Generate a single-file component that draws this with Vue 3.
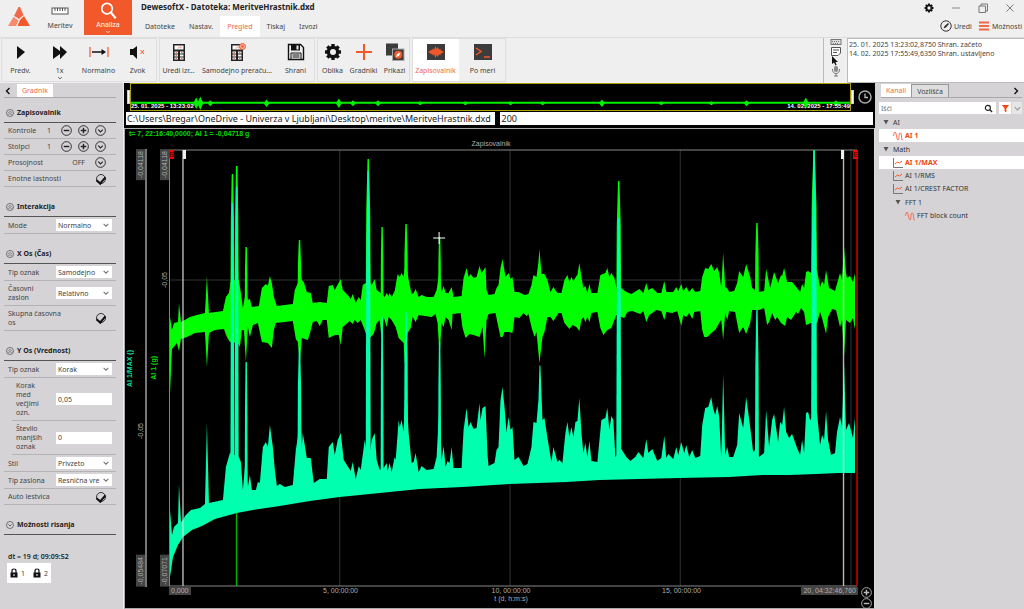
<script setup>
import { ref } from 'vue'

const menu = ['Datoteke', 'Nastav.', 'Pregled', 'Tiskaj', 'Izvozi']
const activeMenu = ref('Pregled')

const ribbon = [
  {
    size: 'lg',
    items: [
      { label: 'Predv.', icon: 'play' },
      { label: '1x', icon: 'forward', more: true },
      { label: 'Normalno', icon: 'span' },
      { label: 'Zvok', icon: 'mute' },
    ],
  },
  {
    size: 'xl',
    items: [
      { label: 'Uredi izr...', icon: 'calc', width: 'narrow' },
      { label: 'Samodejno preraču...', icon: 'calc-auto', width: 'wide' },
      { label: 'Shrani', icon: 'save', width: 'narrow' },
    ],
  },
  {
    size: 'sm',
    items: [
      { label: 'Oblika', icon: 'gear' },
      { label: 'Gradniki', icon: 'cross' },
      { label: 'Prikazi', icon: 'displays' },
    ],
  },
  {
    size: 'md',
    items: [
      { label: 'Zapisovalnik', icon: 'wave', active: true },
      { label: 'Po meri', icon: 'console' },
    ],
  },
]

const sections = [
  {
    title: 'Zapisovalnik',
    open: true,
    rows: [
      { label: 'Kontrole', type: 'stepper', value: '1' },
      { label: 'Stolpci', type: 'stepper', value: '1' },
      { label: 'Prosojnost', type: 'expand', value: 'OFF' },
      { label: 'Enotne lastnosti', type: 'check', value: true },
    ],
  },
  {
    title: 'Interakcija',
    open: true,
    rows: [{ label: 'Mode', type: 'select', value: 'Normalno' }],
  },
  {
    title: 'X Os (Čas)',
    open: true,
    rows: [
      { label: 'Tip oznak', type: 'select', value: 'Samodejno' },
      { label: 'Časovni zaslon', type: 'select', value: 'Relativno' },
      { label: 'Skupna časovna os', type: 'check', value: true },
    ],
  },
  {
    title: 'Y Os (Vrednost)',
    open: true,
    rows: [
      { label: 'Tip oznak', type: 'select', value: 'Korak' },
      { label: 'Korak med večjimi ozn.', type: 'text', value: '0,05', indent: true },
      { label: 'Število manjših oznak', type: 'text', value: '0', indent: true },
      { label: 'Stil', type: 'select', value: 'Privzeto' },
      { label: 'Tip zaslona', type: 'select', value: 'Resnična vre' },
      { label: 'Auto lestvica', type: 'check', value: true },
    ],
  },
  { title: 'Možnosti risanja', open: false, rows: [] },
]

const channels = [
  { label: 'AI', kind: 'group', level: 0 },
  { label: 'AI 1', kind: 'signal', level: 1, active: true },
  { label: 'Math', kind: 'group', level: 0 },
  { label: 'AI 1/MAX', kind: 'math', level: 1, active: true },
  { label: 'AI 1/RMS', kind: 'math', level: 1 },
  { label: 'AI 1/CREST FACTOR', kind: 'math', level: 1 },
  { label: 'FFT 1', kind: 'group', level: 1 },
  { label: 'FFT block count', kind: 'signal', level: 2 },
]

const log = [
  '25. 01. 2025 13:23:02,8750 Shran. začeto',
  '14. 02. 2025 17:55:49,6350 Shran. ustavljeno',
]

const filePath = ref('C:\\Users\\Bregar\\OneDrive - Univerza v Ljubljani\\Desktop\\meritve\\MeritveHrastnik.dxd')
const fileNote = ref('200')
const search = ref('')

// envelope of AI 1, upper edge then lower edge
const aiTop = '170,317 172,330 174,323 178,322 179,303 181,322 183,321 190,317 197,315 205,313 207,276 209,313 223,311 226,297 229,293 231,280 239,280 241,293 243,308 245,297 246,290 248,300 250,299 252,307 259,306 262,288 266,284 268,286 270,276 272,283 274,297 277,306 293,304 295,290 298,283 300,270 302,280 304,282 307,292 311,293 313,303 320,302 327,303 329,286 333,285 335,290 341,279 343,290 348,295 351,299 353,294 356,303 359,297 361,300 363,285 366,283 371,283 372,285 375,279 377,290 381,293 385,297 387,293 389,296 390,293 392,297 395,291 398,274 400,277 402,273 404,277 406,262 409,280 412,294 414,293 416,289 419,297 422,295 427,297 434,297 437,290 440,270 442,292 444,286 446,293 449,293 452,287 454,297 462,296 464,278 467,268 469,277 471,274 474,278 477,277 480,266 482,273 486,267 487,290 489,295 495,294 497,288 499,285 501,268 503,259 506,277 509,273 511,279 513,277 515,292 519,292 525,295 529,294 532,285 534,275 537,277 539,262 540,249 542,274 545,274 548,280 551,292 554,287 558,293 562,293 565,280 568,275 570,282 572,277 574,281 577,276 578,275 580,263 582,277 584,288 586,286 588,293 590,284 592,293 598,293 601,275 606,273 608,268 610,277 612,273 615,278 617,287 622,288 627,292 632,294 637,291 640,289 644,293 647,283 649,290 653,288 658,293 662,293 665,281 667,292 674,292 677,287 679,291 682,284 684,291 687,287 690,292 693,288 696,292 701,291 703,277 706,268 709,269 712,264 715,271 718,267 720,273 722,287 724,253 726,287 728,288 730,292 735,291 738,283 740,271 744,277 747,264 751,277 753,288 756,290 760,292 765,291 767,269 771,288 775,272 779,283 782,275 783,276 785,268 788,282 793,282 798,288 801,292 803,284 805,288 807,272 809,271 812,273 818,270 821,287 823,281 825,285 827,270 830,288 836,291 841,273 843,280 845,247 847,273 848,278 851,276 854,282 856,273'
const aiBottom = '856,330 854,318 851,323 847,320 845,357 843,320 841,327 837,310 833,309 829,317 827,334 823,318 821,312 818,323 812,323 807,325 805,312 802,308 799,314 797,312 792,320 788,317 786,326 782,323 778,317 776,320 773,313 770,322 768,325 765,308 760,310 756,310 753,310 751,323 747,334 744,327 740,333 738,323 736,312 730,311 728,320 726,313 724,340 722,320 720,323 716,330 712,333 708,337 705,337 703,330 701,311 695,312 693,319 690,313 687,317 684,315 682,326 678,311 673,313 667,312 665,320 662,311 657,310 653,313 650,315 647,322 644,311 641,314 633,311 628,312 625,318 622,317 617,315 615,320 612,328 608,330 604,335 601,328 598,312 592,313 590,322 588,317 586,322 584,317 582,320 580,331 577,327 573,325 570,329 565,323 562,313 559,313 554,321 551,317 548,317 545,332 543,337 540,363 537,332 535,337 532,327 529,314 527,316 524,313 520,318 515,317 513,333 510,332 505,332 503,337 501,337 498,323 496,313 489,314 487,320 485,358 483,327 480,337 474,335 470,334 466,338 463,328 461,313 453,314 452,330 449,320 446,317 444,327 442,323 440,357 438,323 436,314 432,317 419,315 416,322 413,317 411,328 408,333 406,363 405,362 404,343 399,338 396,327 392,320 389,317 387,327 384,317 382,340 380,320 377,323 374,334 368,340 365,330 361,320 358,323 355,320 353,324 350,321 343,327 341,345 339,335 335,335 329,338 327,320 323,320 320,326 317,321 313,322 311,330 308,340 302,338 300,363 298,342 296,339 293,321 276,323 274,330 272,348 268,343 262,342 258,323 253,325 250,337 248,327 246,362 244,330 242,330 240,347 238,343 230,342 227,337 224,329 215,330 209,333 207,367 205,332 195,333 187,337 181,339 179,351 177,343 172,349 170,393'

// envelope of AI 1/MAX
const maxTop = '170,510 172,535 174,527 178,523 179,484 181,522 183,520 185,516 191,510 200,508 205,504 207,423 209,503 223,500 226,467 230,453 239,457 241,462 243,490 245,467 248,487 250,475 252,490 256,490 258,482 260,483 263,447 266,442 268,447 270,425 273,447 275,470 277,486 280,484 285,487 293,485 296,450 298,437 300,400 302,447 303,433 307,458 311,458 314,483 320,479 327,479 329,447 333,442 335,455 338,440 341,433 344,460 351,471 353,462 356,479 359,466 361,470 365,440 367,453 370,453 372,440 375,433 377,460 380,470 384,468 387,463 388,471 390,463 392,472 395,457 396,460 399,420 400,427 402,420 404,432 406,380 409,433 412,463 414,462 416,453 419,472 422,466 427,470 434,469 437,457 440,400 442,460 444,446 446,467 448,461 450,463 452,447 454,468 462,468 464,430 467,408 469,427 471,422 474,429 477,428 480,403 481,420 483,408 486,406 488,455 489,466 495,463 497,450 499,447 501,400 503,387 505,407 507,432 509,417 511,430 513,427 515,460 519,457 524,466 528,464 532,447 534,422 537,423 539,400 540,365 541,366 543,420 545,418 548,438 552,462 554,447 558,462 560,460 563,463 566,433 568,422 570,437 572,427 574,437 576,422 578,421 580,398 582,433 584,453 586,443 588,457 590,441 592,461 598,462 602,420 606,418 608,408 610,430 612,416 614,420 616,457 622,449 627,457 631,461 636,457 639,452 644,458 647,439 649,453 653,449 658,461 662,458 665,436 667,458 669,454 674,459 677,447 679,455 682,442 685,453 687,445 690,457 693,450 696,458 701,456 703,425 706,408 709,407 712,397 714,409 716,415 718,406 720,417 722,457 724,374 726,455 728,447 730,457 734,457 738,445 740,413 744,428 747,397 751,427 754,452 756,450 760,457 765,453 767,410 770,447 773,420 775,414 779,442 781,422 783,425 785,407 787,432 790,438 793,434 798,448 801,455 803,440 805,453 807,413 809,412 811,420 818,413 821,445 823,435 825,440 827,411 829,440 832,455 836,453 838,432 841,417 843,427 845,362 847,430 850,423 854,438 856,417'
const maxBottom = '856,473 840,473 817,474 790,475 763,475 730,477 680,478 640,479 600,480 567,482 510,484 463,487 420,489 380,493 340,497 310,501 280,506 253,510 237,513 215,519 202,526 192,530 183,537 178,545 173,557 170,577'

// narrow peaks: position, AI 1 top, AI 1/MAX top, base, half width
const peaks = [
  { x: 232.5, top: 174, max: 203, base: 480, half: 2 },
  { x: 236.8, top: 166, max: 187, base: 480, half: 2 },
  { x: 246.3, top: 247, max: 362, base: 495, half: 1.5 },
  { x: 299.7, top: 240, max: 347, base: 460, half: 2 },
  { x: 368.5, top: 159, max: 171, base: 470, half: 2.5 },
  { x: 382.4, top: 227, max: 317, base: 475, half: 1.5 },
  { x: 406.4, top: 224, max: 312, base: 450, half: 2 },
  { x: 440, top: 237, max: 342, base: 470, half: 1.5 },
  { x: 619.4, top: 181, max: 218, base: 465, half: 2.5 },
  { x: 757.8, top: 223, max: 310, base: 465, half: 2 },
  { x: 815, top: 150, max: 150, base: 450, half: 3 },
]

const peakPoints = (x, top, base, half) => {
  const tip = 0.7
  const shoulder = top + (base - top) * 0.35
  const near = half * 0.8
  return `${x - tip},${top} ${x + tip},${top} ${x + near},${shoulder} ${x + half},${base} ${x - half},${base} ${x - near},${shoulder}`
}

const overviewBumps = [
  [30, 1], [54, 1], [77, 6], [81, 7], [91, 3], [147, 4], [219, 5], [233, 3], [258, 3], [300, 2], [345, 2],
  [390, 2], [422, 2], [481, 4], [540, 2], [590, 2], [625, 3], [684, 6], [714, 3],
]
const overviewPoints = overviewBumps.map(([x, h]) => `${x - 3},22 ${x},${22 - h} ${x + 3},22 ${x},${22 + h}`)
</script>

<template>
  <svg class="sprite" aria-hidden="true">
    <symbol id="i-play" viewBox="0 0 20 18"><path d="M6 3L14 9L6 16Z" fill="#111" /></symbol>
    <symbol id="i-forward" viewBox="0 0 20 18"><path d="M3 3L10 8V3L17 9L10 16V11L3 16Z" fill="#111" /></symbol>
    <symbol id="i-span" viewBox="0 0 20 18">
      <path d="M1 4V14M19 4V14" stroke="#f1592a" stroke-width="1.2" />
      <path d="M3 9H14" stroke="#111" stroke-width="1.5" /><path d="M12.5 6L17 9L12.5 12Z" fill="#111" />
    </symbol>
    <symbol id="i-mute" viewBox="0 0 20 18">
      <path d="M2 6H5L9 3V16L5 12H2Z" fill="#111" /><path d="M12.5 7L16 11M16 7L12.5 11" stroke="#f1592a" />
    </symbol>
    <symbol id="i-calc" viewBox="0 0 20 18">
      <rect x="4" y="1" width="12" height="17" fill="#222" /><rect x="5.5" y="2.5" width="9" height="4" fill="#fff" />
      <path d="M9 5.5L11 3.5M12 3.5V5.5" stroke="#f1592a" stroke-width="0.8" />
      <path d="M5.5 9.5H9M11 9.5H14.5M5.5 12.5H9M11 12.5H14.5M5.5 15.5H9M11 15.5H14.5" stroke="#fff" stroke-width="2" />
      <path d="M6.5 9.5H8M12 9.5H13.5M6.5 12.5H8M6.5 15.5H8M12 15.5H13.5" stroke="#f1592a" stroke-width="0.8" />
    </symbol>
    <symbol id="i-calc-auto" viewBox="0 0 20 18">
      <use href="#i-calc" width="20" height="18" />
      <circle cx="15.5" cy="3.5" r="3" fill="#f9b59f" stroke="#f1592a" /><circle cx="15.5" cy="3.5" r="1.3" fill="#f1592a" />
    </symbol>
    <symbol id="i-save" viewBox="0 0 20 18">
      <path d="M2.5 1.5H14.5L17.5 4.5V16.5H2.5Z" fill="none" stroke="#111" stroke-width="1.4" />
      <path d="M5 1H14V7.5H5Z" fill="#111" /><rect x="10.5" y="2.5" width="2" height="4" fill="#efefef" />
      <path d="M5 16V10H15V16M6.5 12H13.5M6.5 14H13.5" fill="none" stroke="#111" />
    </symbol>
    <symbol id="i-gear" viewBox="0 0 20 18">
      <g fill="#111">
        <path d="M8.3 1H11.7V17H8.3Z" /><path d="M2 7.3H18V10.7H2Z" />
        <path d="M8.3 1H11.7V17H8.3Z" transform="rotate(45 10 9)" /><path d="M8.3 1H11.7V17H8.3Z" transform="rotate(-45 10 9)" />
        <circle cx="10" cy="9" r="6.3" />
      </g>
      <circle cx="10" cy="9" r="3" fill="#efefef" />
    </symbol>
    <symbol id="i-cross" viewBox="0 0 20 18"><path d="M10 1V17M2 9H18" stroke="#f1592a" stroke-width="2" /></symbol>
    <symbol id="i-displays" viewBox="0 0 20 18">
      <rect x="1" y="0.5" width="12" height="12" fill="#3c3c3c" /><rect x="7.5" y="6" width="11.5" height="11.5" fill="#3c3c3c" stroke="#aaa" />
      <circle cx="13.2" cy="11.8" r="4" fill="#f1592a" /><path d="M11 14L12 11L15.5 9.5L14 13Z" fill="#fff" />
    </symbol>
    <symbol id="i-wave" viewBox="0 0 20 18">
      <rect x="1" y="1" width="18" height="16" fill="#3c3c3c" />
      <path d="M2 9L4 8L5 6.5L6 7.5L7 5L8 7L9.5 3L10.5 6L12 4L13 7L14 5.5L15 7.5L18 9L15 10.5L14 12.5L13 11L12 14L10.5 12L9.5 15L8 11L7 13L6 10.5L5 11.5L4 10Z" fill="#f1592a" />
    </symbol>
    <symbol id="i-console" viewBox="0 0 20 18">
      <rect x="1" y="1" width="18" height="16" fill="#3c3c3c" /><path d="M3 5L8 8.5L3 12M11 14H17" fill="none" stroke="#f1592a" stroke-width="1.5" />
    </symbol>
    <symbol id="i-down" viewBox="0 0 10 10"><path d="M2 3.5L5 6.5L8 3.5" fill="none" stroke="currentColor" stroke-width="1.4" /></symbol>
    <symbol id="i-ring-down" viewBox="0 0 12 12">
      <circle cx="6" cy="6" r="5.3" fill="none" stroke="currentColor" /><path d="M3.5 5L6 7.5L8.5 5" fill="none" stroke="currentColor" stroke-width="1.2" />
    </symbol>
    <symbol id="i-ring-up" viewBox="0 0 12 12">
      <circle cx="6" cy="6" r="5.3" fill="none" stroke="currentColor" /><path d="M3 6.5L6 3.5L9 6.5M3.5 9L6 6.5L8.5 9" fill="none" stroke="currentColor" />
    </symbol>
    <symbol id="i-ring-minus" viewBox="0 0 12 12">
      <circle cx="6" cy="6" r="5.3" fill="none" stroke="currentColor" /><path d="M3 6H9" stroke="currentColor" stroke-width="1.6" />
    </symbol>
    <symbol id="i-ring-plus" viewBox="0 0 12 12">
      <circle cx="6" cy="6" r="5.3" fill="none" stroke="currentColor" /><path d="M3 6H9M6 3V9" stroke="currentColor" stroke-width="1.6" />
    </symbol>
    <symbol id="i-lock" viewBox="0 0 8 10">
      <path d="M2 5V3Q2 1 4 1Q6 1 6 3V5" fill="none" stroke="#111" stroke-width="1.2" /><rect x="0.5" y="4.5" width="7" height="5" fill="#111" />
      <rect x="3.5" y="6" width="1" height="2" fill="#fff" />
    </symbol>
    <symbol id="i-signal" viewBox="0 0 10 10">
      <path d="M0.5 5Q1 1 2 1Q3 1 3.5 5T5 9Q6 9 6 5T7.5 2Q8.5 2 8.5 6T10 9" fill="none" stroke="#f1694a" stroke-width="0.9" />
    </symbol>
    <symbol id="i-math" viewBox="0 0 10 10">
      <path d="M0.5 0V9.5H10" fill="none" stroke="#777" /><path d="M2 6L4.5 4L6.5 5L9 3" fill="none" stroke="#f1592a" />
    </symbol>
  </svg>

  <div class="app">
    <header class="topbar">
      <svg class="logo" viewBox="0 0 22 20" aria-label="Dewesoft">
        <path d="M10.5 0L12 0L15.5 8L11 12L8 10L6 9Z" fill="#f1694a" />
        <path d="M5.5 10L10.5 13.5L8 19H0Z" fill="#f58a6c" /><path d="M16 9L22 19H9.5L12 13Z" fill="#f1592a" />
      </svg>
      <button class="mode">
        <svg class="mode-icon" viewBox="0 0 18 18"><rect x="1" y="6" width="16" height="6" fill="#fff" stroke="#555" /><path d="M4 6V9M6.5 6V9M9 6V9M11.5 6V9M14 6V9" stroke="#555" /></svg>
        <span>Meritev</span>
      </button>
      <button class="mode mode--active">
        <svg class="mode-icon" viewBox="0 0 18 18"><circle cx="8" cy="7" r="5.5" fill="none" stroke="#fff" stroke-width="1.8" /><path d="M12 11L17 17" stroke="#fff" stroke-width="2.2" /></svg>
        <span>Analiza</span>
        <svg class="mode-more"><use href="#i-down" /></svg>
      </button>
      <div class="heading">
        <h1>DewesoftX - Datoteka: MeritveHrastnik.dxd</h1>
        <nav class="menu">
          <button
            v-for="item in menu"
            :key="item"
            class="menu-item"
            :class="{ 'menu-item--active': item === activeMenu }"
            @click="activeMenu = item"
          >{{ item }}</button>
        </nav>
      </div>
      <div class="window-tools">
        <div class="window-buttons">
          <button aria-label="Nastavitve"><svg viewBox="0 0 20 18"><use href="#i-gear" /></svg></button>
          <button aria-label="Pomanjšaj"><svg viewBox="0 0 10 10"><path d="M1 5H9" stroke="#888" /></svg></button>
          <button aria-label="Obnovi"><svg viewBox="0 0 10 10"><path d="M1 3H7.5V9.5H1ZM3 3V1H9.5V8H7.5" fill="none" stroke="#777" /></svg></button>
          <button aria-label="Zapri"><svg viewBox="0 0 10 10"><path d="M1.5 1.5L8.5 8.5M8.5 1.5L1.5 8.5" stroke="#777" /></svg></button>
        </div>
        <div class="window-links">
          <button>
            <svg viewBox="0 0 12 12"><circle cx="6" cy="6" r="5.2" fill="none" stroke="#333" /><path d="M3.5 8.5L4.5 6L8 3L9 4L6 7.5Z" fill="#333" /></svg>
            Uredi
          </button>
          <button>
            <svg viewBox="0 0 12 12"><path d="M1 2.5H11M1 6H11M1 9.5H11" stroke="#f1694a" stroke-width="1.8" /></svg>
            Možnosti
          </button>
        </div>
      </div>
    </header>

    <section class="ribbon">
      <div v-for="(group, gi) in ribbon" :key="gi" class="ribbon-group" :class="`ribbon-group--${group.size}`">
        <button
          v-for="item in group.items"
          :key="item.label"
          class="tool"
          :class="[{ 'tool--active': item.active }, item.width ? `tool--${item.width}` : '']"
        >
          <svg class="tool-icon"><use :href="`#i-${item.icon}`" /></svg>
          <span>{{ item.label }}</span>
          <svg v-if="item.more" class="tool-more"><use href="#i-down" /></svg>
        </button>
      </div>
      <div class="ribbon-fill"></div>
      <div class="note-tools">
        <svg viewBox="0 0 12 42">
          <rect x="1" y="1.5" width="10" height="5" fill="#ddd" stroke="#777" /><path d="M2 3.5H10M3 5.5H9" stroke="#777" stroke-dasharray="1 1" />
          <path d="M1.5 9.5H10.5V15L8 17.5H1.5ZM3 12H9M3 14.5H7" fill="#fff" stroke="#555" />
          <path d="M2 18V26L4 24.5L5.5 27.5L6.5 27L5.5 24H8Z" fill="#111" />
          <rect x="4" y="28" width="4" height="6" rx="2" fill="#888" /><path d="M2.5 31Q2.5 35.5 6 35.5Q9.5 35.5 9.5 31M6 35.5V38M4 38H8" fill="none" stroke="#777" />
        </svg>
      </div>
      <div class="log">
        <p v-for="line in log" :key="line">{{ line }}</p>
      </div>
    </section>

    <main class="workspace">
      <aside class="props">
        <div class="tabs">
          <button class="tab-arrow" aria-label="Nazaj"><svg viewBox="0 0 8 10"><path d="M5.5 2L2.5 5L5.5 8" fill="none" stroke="#111" stroke-width="1.4" /></svg></button>
          <button class="tab tab--active">Gradnik</button>
        </div>
        <section v-for="(section, si) in sections" :key="section.title" class="section">
          <h2>
            <svg class="ring"><use :href="section.open ? '#i-ring-up' : '#i-ring-down'" /></svg>
            {{ section.title }}
          </h2>
          <div v-for="(row, ri) in section.rows" :key="ri" class="row" :class="{ 'row--indent': row.indent }">
            <label :for="`f${si}-${ri}`" class="row-label" :class="`row-label--${row.type}`">{{ row.label }}</label>
            <div v-if="row.type === 'stepper'" class="row-actions">
              <output :id="`f${si}-${ri}`" class="row-value">{{ row.value }}</output>
              <button aria-label="Manj"><svg><use href="#i-ring-minus" /></svg></button>
              <button aria-label="Več"><svg><use href="#i-ring-plus" /></svg></button>
              <button aria-label="Odpri"><svg><use href="#i-ring-down" /></svg></button>
            </div>
            <div v-else-if="row.type === 'expand'" class="row-actions">
              <output :id="`f${si}-${ri}`" class="row-value">{{ row.value }}</output>
              <button aria-label="Odpri"><svg><use href="#i-ring-down" /></svg></button>
            </div>
            <div v-else-if="row.type === 'check'" class="row-actions">
              <input :id="`f${si}-${ri}`" v-model="row.value" type="checkbox" class="check" />
            </div>
            <div v-else-if="row.type === 'select'" class="field field--select">
              <select :id="`f${si}-${ri}`"><option>{{ row.value }}</option></select>
              <svg><use href="#i-down" /></svg>
            </div>
            <div v-else class="field"><input :id="`f${si}-${ri}`" type="text" :value="row.value" /></div>
          </div>
        </section>
        <p class="delta">dt = 19 d; 09:09:52</p>
        <div class="locks">
          <button v-for="n in 2" :key="n"><svg><use href="#i-lock" /></svg>{{ n }}</button>
        </div>
      </aside>

      <section class="center">
        <div class="overview">
          <span class="handle"></span>
          <div class="overview-range">
            <svg viewBox="0 0 716 27" preserveAspectRatio="none">
              <path d="M0 19.5H716" stroke="#00f000" stroke-width="2" />
              <g fill="#00f000" transform="translate(-12 -2)"><polygon v-for="p in overviewPoints" :key="p" :points="p" /></g>
            </svg>
            <div class="overview-dates"><span>25. 01. 2025 - 13:23:02</span><span>14. 02. 2025 - 17:55:49</span></div>
          </div>
          <span class="handle"></span>
          <button class="clock" aria-label="Čas">
            <svg viewBox="0 0 14 14"><circle cx="7" cy="7" r="6" fill="none" stroke="#aaa" stroke-width="1.5" /><path d="M7 3.5V7.5H10" fill="none" stroke="#bbb" stroke-width="1.3" /></svg>
          </button>
        </div>

        <div class="file-row">
          <input v-model="filePath" type="text" aria-label="Datoteka" />
          <input v-model="fileNote" type="text" aria-label="Opomba" />
        </div>

        <div class="recorder">
          <p class="readout">t= 7, 22:16:40,0000; AI 1 = -0,04718 g</p>
          <p class="plot-title">Zapisovalnik</p>
          <div class="axis axis--max">
            <span class="axis-name">AI 1/MAX ()</span>
            <div class="axis-ticks"><span class="limit">-0,04118</span><span>-0,05</span><span class="limit">-0,05484</span></div>
          </div>
          <div class="axis axis--ai">
            <span class="axis-name">AI 1 (g)</span>
            <div class="axis-ticks"><span class="limit">-0,04118</span><span>-0,05</span><span class="limit">-0,07071</span></div>
          </div>
          <div class="plot">
            <svg viewBox="169 149 690 438" preserveAspectRatio="none">
              <path d="M340 150V586M510.5 150V586M681 150V586M852 150V586M169 280H858" stroke="#333" fill="none" />
              <path d="M169 150H858M169 586H858" stroke="#888" />
              <path d="M236.7 166V586" stroke="#00b400" stroke-width="1.5" />
              <g fill="#0f0">
                <polygon :points="`${aiTop} ${aiBottom}`" />
                <polygon v-for="p in peaks" :key="p.x" :points="peakPoints(p.x, p.top, 310, p.half)" />
              </g>
              <g fill="#00ffaf">
                <polygon :points="`${maxTop} ${maxBottom}`" />
                <polygon v-for="p in peaks" :key="p.x" :points="peakPoints(p.x, p.max, p.base, p.half)" />
              </g>
              <path d="M169.5 150V586" stroke="#e05a6a" />
              <path d="M183 150V586M844.5 150V586" stroke="#d8d8d8" stroke-opacity="0.85" stroke-width="1.4" />
              <path d="M858 150V586" stroke="#d00000" stroke-width="1.5" />
              <path d="M439.5 232V244M433.5 238H445.5" stroke="#fff" />
            </svg>
            <span class="flag flag--begin">B</span>
            <span class="flag flag--cursor-1"></span>
            <span class="flag flag--cursor-2"></span>
            <span class="flag flag--end">E</span>
          </div>
          <div class="time-axis">
            <span class="limit">0,000</span>
            <span>5, 00:00:00</span>
            <span>10, 00:00:00</span>
            <span>15, 00:00:00</span>
            <span class="limit limit--right">20, 04:32:46,760</span>
            <span class="time-unit">t (d, h:m:s)</span>
          </div>
          <div class="plot-zoom">
            <button aria-label="Povečaj"><svg><use href="#i-ring-plus" /></svg></button>
            <button aria-label="Zmanjšaj"><svg><use href="#i-ring-minus" /></svg></button>
          </div>
        </div>
      </section>

      <aside class="channels">
        <div class="tabs">
          <button class="tab tab--active">Kanali</button>
          <button class="tab tab--plain">Vozlišča</button>
          <span class="tabs-fill"></span>
          <button class="tab-arrow" aria-label="Naprej"><svg viewBox="0 0 8 10"><path d="M2.5 2L5.5 5L2.5 8" fill="none" stroke="#111" stroke-width="1.4" /></svg></button>
        </div>
        <div class="search">
          <div class="search-box">
            <input v-model="search" type="text" placeholder="Išči" aria-label="Išči" />
            <svg viewBox="0 0 10 10"><circle cx="4.3" cy="4.3" r="2.8" fill="none" stroke="#222" stroke-width="1.3" /><path d="M6.5 6.5L9 9" stroke="#222" stroke-width="1.5" /></svg>
          </div>
          <button class="filter" aria-label="Filter"><svg viewBox="0 0 10 10"><path d="M1 1H9L6 5V9.5L4 8V5Z" fill="#f1480f" /></svg></button>
          <button class="filter filter--more" aria-label="Več filtrov"><svg><use href="#i-down" /></svg></button>
        </div>
        <ul class="tree">
          <li
            v-for="node in channels"
            :key="node.label"
            class="node"
            :class="[`node--${node.kind}`, `node--level-${node.level}`, { 'node--active': node.active }]"
          >
            <svg v-if="node.kind === 'group'" class="node-caret" viewBox="0 0 6 6"><path d="M0.5 1H5.5L3 5.5Z" fill="#555" /></svg>
            <svg v-else class="node-icon"><use :href="`#i-${node.kind}`" /></svg>
            {{ node.label }}
          </li>
        </ul>
      </aside>
    </main>
  </div>
</template>

<style>
body {
  margin: 0;
  background: #efefef;
}
</style>

<style scoped>
* {
  box-sizing: border-box;
}

.sprite {
  position: absolute;
  width: 0;
  height: 0;
}

.app {
  height: 100vh;
  display: flex;
  flex-direction: column;
  overflow: hidden;
  background: #efefef;
  color: #444;
  font-family: "Noto Sans", "Open Sans", sans-serif;
  font-size: 7px;
  line-height: 9px;
}

button,
input,
select {
  margin: 0;
  padding: 0;
  border: 0;
  border-radius: 0;
  background: none;
  color: inherit;
  font: inherit;
}

svg {
  display: block;
}

h1,
h2,
p,
ul {
  margin: 0;
  padding: 0;
}

.topbar {
  display: flex;
  height: 37px;
  flex: none;
}

.logo {
  width: 22px;
  height: 20px;
  margin: 7px 6px 0 8px;
}

.mode {
  width: 48px;
  height: 35px;
  display: flex;
  flex-direction: column;
  align-items: center;
}

.mode-icon {
  width: 18px;
  height: 18px;
  margin: 2px 0 1px;
}

.mode--active {
  background: #f1592a;
  color: #fff;
}

.mode-more {
  width: 8px;
  height: 6px;
}

.heading {
  flex: 1;
  padding-left: 9px;
  display: flex;
  flex-direction: column;
  justify-content: space-between;
}

h1 {
  padding-top: 1px;
  color: #222;
  font-size: 8px;
  line-height: 11px;
}

.menu {
  display: flex;
  margin-left: -3px;
}

.menu-item {
  height: 21px;
  padding: 0 7px;
}

.menu-item--active {
  background: #fff;
  color: #f1694a;
}

.window-tools {
  display: flex;
  flex-direction: column;
  align-items: flex-end;
  padding: 2px 2px 0 0;
}

.window-buttons {
  display: flex;
  gap: 15px;
  padding-right: 6px;
}

.window-buttons svg {
  width: 12px;
  height: 10px;
}

.window-buttons button {
  height: 12px;
}

.window-links {
  display: flex;
  gap: 6px;
  margin-top: 6px;
}

.window-links button {
  display: flex;
  align-items: center;
  gap: 2px;
}

.window-links svg {
  width: 12px;
  height: 12px;
}

.ribbon {
  display: flex;
  gap: 2px;
  height: 46px;
  flex: none;
  padding-left: 1px;
  border-top: 1px solid #ddd;
}

.ribbon-group {
  display: flex;
  height: 44px;
  outline: 1px solid #dedede;
  outline-offset: -1px;
}

.ribbon-group--lg .tool {
  width: 39px;
}

.ribbon-group--sm .tool {
  width: 31px;
}

.ribbon-group--md .tool {
  width: 47px;
}

.tool {
  display: flex;
  flex-direction: column;
  align-items: center;
  padding-top: 5px;
  white-space: nowrap;
}

.tool--narrow {
  width: 39px;
}

.tool--wide {
  width: 78px;
}

.tool--active {
  background: #fff;
  color: #f1694a;
}

.tool-icon {
  width: 20px;
  height: 18px;
  margin-bottom: 5px;
}

.tool-more {
  width: 8px;
  height: 6px;
}

.ribbon-fill {
  flex: 1;
}

.note-tools {
  width: 22px;
  padding-left: 6px;
  border-left: 1px solid #bbb;
}

.note-tools svg {
  width: 12px;
  height: 42px;
}

.log {
  width: 177px;
  padding: 1px;
  background: #fff;
  border: 1px solid #bbb;
  border-right: 0;
  white-space: nowrap;
}

.workspace {
  flex: 1;
  min-height: 0;
  display: flex;
}

.props {
  width: 124px;
  flex: none;
  padding: 1px 7px 0 4px;
  background: #d6d3d6;
  border-right: 1px solid #eee;
}

.tabs {
  display: flex;
  align-items: stretch;
  height: 14px;
  border-bottom: 1px solid #aaa;
}

.tab-arrow {
  width: 13px;
}

.tab-arrow svg {
  width: 8px;
  height: 10px;
}

.tab {
  padding: 0 5px;
}

.tab--active {
  background: #fff;
  color: #f1694a;
}

.tab--plain {
  background: #dedede;
  border: 1px solid #999;
  border-bottom: 0;
}

.tabs-fill {
  flex: 1;
}

h2 {
  display: flex;
  align-items: center;
  gap: 3px;
  padding: 15px 0 5px 2px;
  border-bottom: 1px solid #555;
  color: #222;
  font-size: 7px;
  line-height: 9px;
}

.tabs + .section h2 {
  padding-top: 10px;
}

.ring {
  width: 8px;
  height: 8px;
  color: #444;
}

.row {
  display: flex;
  align-items: center;
  justify-content: space-between;
  padding: 2px 4px;
  border-bottom: 1px solid #b5b2b5;
}

.row--indent {
  margin-left: 8px;
}

.row-label {
  padding: 1px 0;
}

.row-label--check {
  max-width: 60px;
}

.row-label--select {
  max-width: 38px;
}

.row-label--text {
  width: 28px;
}

.row-actions {
  display: flex;
  align-items: center;
  gap: 6px;
  padding-right: 6px;
}

.row-actions svg {
  width: 11px;
  height: 11px;
  color: #222;
}

.row-value {
  margin-right: 4px;
}

.check {
  appearance: none;
  width: 10px;
  height: 10px;
  display: flex;
  justify-content: center;
  border: 1px solid #333;
  border-radius: 50%;
}

.check:checked::after {
  content: "";
  width: 4px;
  height: 7px;
  border: solid #111;
  border-width: 0 2px 2px 0;
  transform: rotate(40deg);
}

.field {
  width: 56px;
  height: 12px;
  flex: none;
  background: #fff;
  position: relative;
}

.field input,
.field select {
  width: 100%;
  height: 100%;
  padding: 0 2px;
  appearance: none;
  display: block;
}

.field svg {
  position: absolute;
  right: 2px;
  top: 2px;
  width: 8px;
  height: 8px;
  color: #777;
  pointer-events: none;
}

.delta {
  padding: 17px 0 2px 4px;
  color: #222;
  font-weight: 600;
}

.locks {
  display: flex;
  width: 44px;
  height: 20px;
  margin-left: 3px;
  padding: 0 3px;
  justify-content: space-between;
  background: #fff;
}

.locks button {
  display: flex;
  align-items: center;
  gap: 3px;
}

.locks svg {
  width: 8px;
  height: 10px;
}

.center {
  flex: 1;
  min-width: 0;
  display: flex;
  flex-direction: column;
  background: #000;
}

.overview {
  display: flex;
  align-items: center;
  height: 28px;
  flex: none;
  padding-left: 3px;
}

.handle {
  width: 3px;
  height: 14px;
  background: #fff;
  border: 1px solid #ccc;
}

.overview-range {
  flex: 1;
  height: 28px;
  border: 1px solid #a8a000;
  position: relative;
}

.overview-range svg {
  width: 100%;
  height: 26px;
}

.overview-dates {
  position: absolute;
  left: 0;
  right: 0;
  bottom: 0;
  display: flex;
  justify-content: space-between;
  color: #fff;
  font: bold 6px/7px "Liberation Sans", Arial, sans-serif;
}

.clock {
  width: 21px;
  display: flex;
  justify-content: center;
}

.clock svg {
  width: 14px;
  height: 14px;
}

.file-row {
  display: grid;
  grid-template-columns: 369fr 372fr;
  gap: 5px;
  padding: 1px 2px;
  flex: none;
}

.file-row input {
  min-width: 0;
  height: 13px;
  padding: 0 1px;
  background: #fff;
  color: #222;
  font-size: 9px;
}

.recorder {
  flex: 1;
  min-height: 0;
  margin-top: 2px;
  display: grid;
  grid-template-columns: 22px 22px minmax(0, 1fr) 16px;
  grid-template-rows: 10px 10px minmax(0, 1fr) 21px;
  border: 1px solid #aaa;
  border-right-color: #ddd;
  color: #b0b0b0;
  font-family: "Liberation Sans", Arial, sans-serif;
  font-weight: bold;
}

.readout {
  grid-column: 1 / -1;
  padding-left: 4px;
  color: #00dc00;
}

.plot-title {
  grid-column: 1 / -1;
  padding-right: 17px;
  text-align: center;
  font-weight: normal;
}

.axis {
  grid-row: 3;
  display: flex;
  justify-content: space-between;
  border-right: 2px solid #777;
}

.axis--ai {
  border-right: 0;
}

.axis-name {
  align-self: center;
}

.axis-name,
.axis-ticks span {
  writing-mode: vertical-rl;
  transform: rotate(180deg);
}

.axis--max .axis-name {
  color: #00e6a0;
}

.axis--ai .axis-name {
  padding-right: 2px;
  color: #00e600;
}

.axis-ticks {
  display: grid;
  grid-template-rows: 231fr 100fr 105fr;
  align-items: center;
  font-weight: normal;
}

.axis--ai .axis-ticks {
  grid-template-rows: 80fr 100fr 256fr;
}

.axis-ticks .limit:first-child {
  align-self: start;
}

.axis-ticks .limit:last-child {
  align-self: end;
}

.limit {
  background: #444;
  padding: 1px 2px;
}

.axis-ticks .limit {
  padding: 2px 0;
}

.plot {
  grid-row: 3;
  grid-column: 3;
  min-height: 0;
  position: relative;
}

.plot svg {
  width: 100%;
  height: 100%;
}

.flag {
  position: absolute;
  top: 1px;
  width: 5px;
  height: 9px;
  background: #f00;
  color: #700;
}

.flag--begin {
  left: 0;
}

.flag--end {
  right: 0;
}

.flag--cursor-1,
.flag--cursor-2 {
  width: 3px;
  background: #eee;
}

.flag--cursor-1 {
  left: 2%;
}

.flag--cursor-2 {
  right: 2%;
}

.time-axis {
  grid-row: 4;
  grid-column: 3;
  display: grid;
  grid-template-columns: 86fr 171fr 170fr 171fr 91fr;
  grid-template-rows: 8px 8px;
  justify-items: center;
  font-weight: normal;
  line-height: 8px;
}

.time-axis .limit {
  justify-self: start;
  padding: 0 2px;
}

.time-axis .limit--right {
  justify-self: end;
}

.time-unit {
  grid-column: 3;
}

.plot-zoom {
  grid-row: 4;
  grid-column: 4;
  display: flex;
  flex-direction: column;
  align-items: center;
  color: #bbb;
}

.plot-zoom svg {
  width: 11px;
  height: 11px;
}

.channels {
  width: 149px;
  flex: none;
  background: #d6d3d6;
  padding: 1px 0 0 4px;
}

.channels .tabs {
  margin: 0 2px;
}

.channels .tabs .tab-arrow {
  width: 10px;
}

.search {
  display: flex;
  gap: 3px;
  height: 12px;
  margin: 4px 2px 1px 0;
}

.search-box {
  flex: 1;
  display: flex;
  align-items: center;
  background: #fff;
  padding: 0 3px 0 2px;
}

.search-box input {
  flex: 1;
  min-width: 0;
  outline: 0;
}

.search-box svg,
.filter svg {
  width: 9px;
  height: 9px;
}

.filter {
  width: 12px;
  display: flex;
  align-items: center;
  justify-content: center;
  background: #fff;
}

.filter--more {
  width: 10px;
  margin-left: -2px;
  background: #e6e6e6;
  color: #999;
}

.tree {
  list-style: none;
}

.node {
  display: flex;
  align-items: center;
  gap: 2px;
  height: 13px;
  color: #333;
}

.node--group {
  height: 14px;
  gap: 4px;
  padding-left: 4px;
}

.node--group.node--level-1 {
  padding-left: 16px;
}

.node--level-1 {
  padding-left: 14px;
}

.node--level-2 {
  padding-left: 26px;
}

.node--active {
  background: #fff;
  color: #f1480f;
  font-weight: bold;
}

.node-caret {
  width: 6px;
  height: 6px;
}

.node-icon {
  width: 10px;
  height: 10px;
}
</style>
